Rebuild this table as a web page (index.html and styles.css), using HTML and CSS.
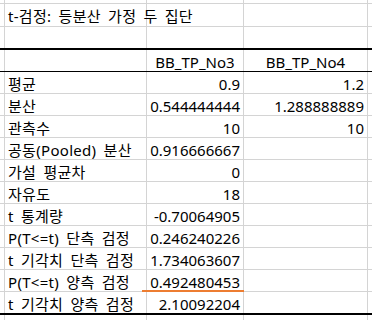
FILE: index.html
```html
<!DOCTYPE html>
<html lang="ko">
<head>
<meta charset="utf-8">
<link rel="stylesheet" href="styles.css">
</head>
<body>
<div class="sheet">
  <div class="row r-pre"><div class="c c0"></div><div class="c ca"></div><div class="c cb"></div><div class="c cc"></div><div class="c cd"></div></div>
  <div class="row r-tall"><div class="c c0"></div><div class="c ca ovf">t-검정: 등분산 가정 두 집단</div><div class="c cb"></div><div class="c cc"></div><div class="c cd"></div></div>
  <div class="row r-tall r-before-head"><div class="c c0"></div><div class="c ca"></div><div class="c cb"></div><div class="c cc"></div><div class="c cd"></div></div>
  <div class="row head"><div class="c c0"></div><div class="c ca"></div><div class="c cb ctr">BB_TP_No3</div><div class="c cc ctr">BB_TP_No4</div><div class="c cd"></div></div>
  <div class="row"><div class="c c0"></div><div class="c ca">평균</div><div class="c cb num">0.9</div><div class="c cc num">1.2</div><div class="c cd"></div></div>
  <div class="row"><div class="c c0"></div><div class="c ca">분산</div><div class="c cb num">0.544444444</div><div class="c cc num">1.288888889</div><div class="c cd"></div></div>
  <div class="row"><div class="c c0"></div><div class="c ca">관측수</div><div class="c cb num">10</div><div class="c cc num">10</div><div class="c cd"></div></div>
  <div class="row"><div class="c c0"></div><div class="c ca">공동(Pooled) 분산</div><div class="c cb num">0.916666667</div><div class="c cc"></div><div class="c cd"></div></div>
  <div class="row"><div class="c c0"></div><div class="c ca">가설 평균차</div><div class="c cb num">0</div><div class="c cc"></div><div class="c cd"></div></div>
  <div class="row"><div class="c c0"></div><div class="c ca">자유도</div><div class="c cb num">18</div><div class="c cc"></div><div class="c cd"></div></div>
  <div class="row"><div class="c c0"></div><div class="c ca">t 통계량</div><div class="c cb num">-0.70064905</div><div class="c cc"></div><div class="c cd"></div></div>
  <div class="row"><div class="c c0"></div><div class="c ca">P(T&lt;=t) 단측 검정</div><div class="c cb num">0.246240226</div><div class="c cc"></div><div class="c cd"></div></div>
  <div class="row"><div class="c c0"></div><div class="c ca">t 기각치 단측 검정</div><div class="c cb num">1.734063607</div><div class="c cc"></div><div class="c cd"></div></div>
  <div class="row"><div class="c c0"></div><div class="c ca">P(T&lt;=t) 양측 검정</div><div class="c cb num mark">0.492480453</div><div class="c cc"></div><div class="c cd"></div></div>
  <div class="row last"><div class="c c0"></div><div class="c ca">t 기각치 양측 검정</div><div class="c cb num">2.10092204</div><div class="c cc"></div><div class="c cd"></div></div>
  <div class="row r-post"><div class="c c0"></div><div class="c ca"></div><div class="c cb"></div><div class="c cc"></div><div class="c cd"></div></div>
</div>
</body>
</html>
```

FILE: styles.css
```css
html, body {
  margin: 0;
  padding: 0;
  background: #ffffff;
}
body {
  width: 372px;
  height: 320px;
  overflow: hidden;
  font-family: "Noto Sans", "Noto Sans CJK KR", sans-serif;
  font-size: 15px;
  color: #000000;
}
.sheet {
  display: flex;
  flex-direction: column;
}
.row {
  display: flex;
  height: 22px;
  box-sizing: border-box;
  border-bottom: 1px solid #d4d4d4;
}
.r-pre { height: 4px; }
.r-tall { height: 23px; }
.r-before-head { border-bottom: 2px solid #000000; }
.head { border-bottom: 1px solid #000000; }
.last { border-bottom: 2px solid #000000; height: 23px; }
.r-post { border-bottom: none; height: 10px; }
.c {
  box-sizing: border-box;
  border-right: 1px solid #d4d4d4;
  height: 100%;
  display: flex;
  align-items: center;
  padding: 3px 3px 0;
  white-space: nowrap;
  line-height: 1;
  position: relative;
}
.c0 { width: 5px; padding: 0; }
.ca { width: 142px; letter-spacing: 0.3px; word-spacing: 3px; }
.cb { width: 97px; }
.cc { width: 124px; }
.cd { width: 4px; padding: 0; border-right: none; }
.ovf { overflow: visible; z-index: 1; }
.ctr { justify-content: center; }
.num { justify-content: flex-end; }
.mark::after {
  content: "";
  position: absolute;
  left: -5px;
  right: -1px;
  bottom: -1px;
  height: 2px;
  background: #ed7d31;
}
```
